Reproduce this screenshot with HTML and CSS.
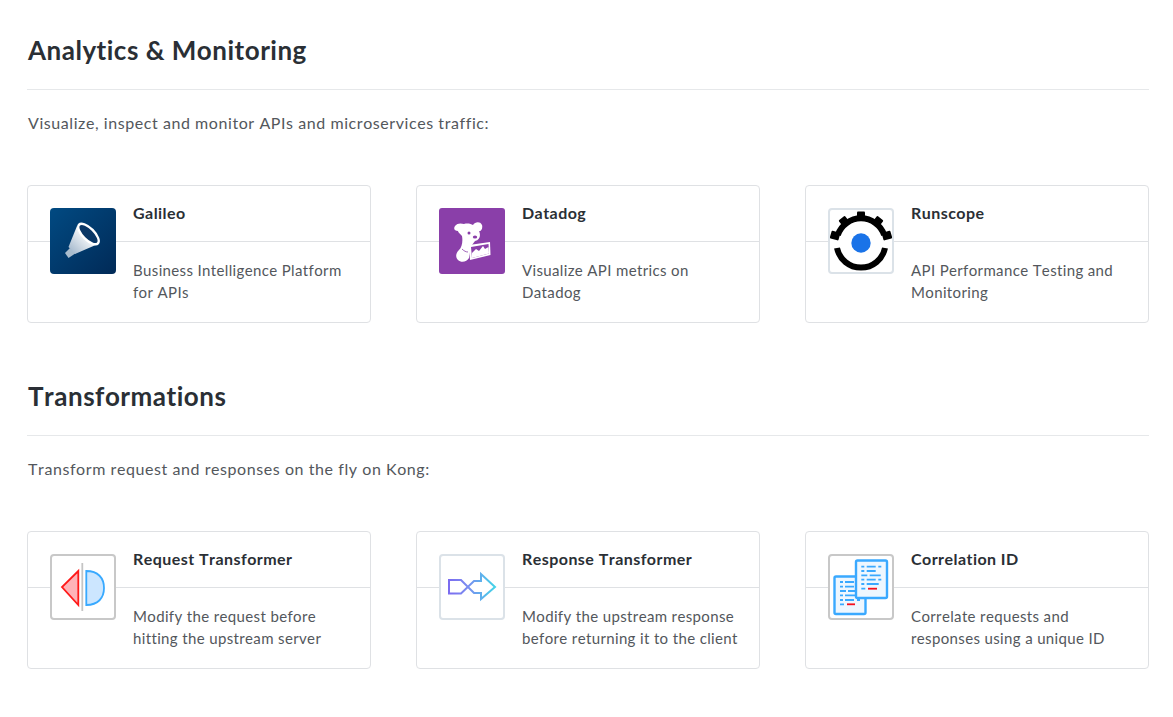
FILE: index.html
```html
<!DOCTYPE html>
<html lang="en">
<head>
<meta charset="utf-8">
<title>Kong Plugins</title>
<link rel="stylesheet" href="styles.css">
</head>
<body>
<main class="page">
  <section class="section">
    <h2 class="title">Analytics &amp; Monitoring</h2>
    <p class="intro">Visualize, inspect and monitor APIs and microservices traffic:</p>
    <div class="grid">
      <article class="card">
        <div class="logo">
          <svg viewBox="0 0 66 66" width="66" height="66">
            <defs>
              <linearGradient id="gbg" x1="0" y1="0" x2="1" y2="1"><stop offset="0" stop-color="#014a82"/><stop offset="1" stop-color="#012a57"/></linearGradient>
              <linearGradient id="gcone" x1="0" y1="1" x2="1" y2="0"><stop offset="0.1" stop-color="#a9bccf"/><stop offset="0.7" stop-color="#ffffff"/></linearGradient>
            </defs>
            <rect width="66" height="66" rx="4" fill="url(#gbg)"/>
            <path d="M20 40 L15 45 L18.500 50 L26 45 Z" fill="#a9bccd"/>
            <path d="M27 18 L18.500 39 L25 46 L48 36 Z" fill="url(#gcone)"/>
            <ellipse cx="38.500" cy="26" rx="14.500" ry="7" transform="rotate(45 38.500 26)" fill="#fff"/>
            <ellipse cx="38.500" cy="26" rx="12" ry="4.500" transform="rotate(45 38.500 26)" fill="#0a3766"/>
          </svg>
        </div>
        <div class="body">
          <h3 class="name">Galileo</h3>
          <p class="desc">Business Intelligence Platform for APIs</p>
        </div>
      </article>
      <article class="card">
        <div class="logo">
          <svg viewBox="0 0 66 66" width="66" height="66">
            <rect width="66" height="66" rx="3" fill="#8a3fa9"/>
            <path d="M16 18 C18 15 22 15 25 16 C29 15 32 16 34 17 C36 14 41 13 43 17 C44 20 42 24 40 23 C42 27 41 32 36 33 L33 37 L31 44 L30 50 C28 54 22 55 19 52 C16 49 17 45 20 42 C23 39 24 33 23 28 C20 25 19 24 19 23 C16 23 14 21 16 18 Z" fill="#fff"/>
            <path d="M30 37 L51 34 L51.500 47 L31 52 Z" fill="#fff"/>
            <path d="M32 39 L49.500 36 L50 45.500 L33 50 Z" fill="#8a3fa9"/>
            <path d="M33 50 L33 45 L37 41 L40 43 L44 38 L46 41 L49.500 39 L50 45.500 Z" fill="#fff"/>
            <circle cx="30" cy="25" r="1.500" fill="#8a3fa9"/>
            <ellipse cx="36" cy="29" rx="2.200" ry="1.500" fill="#8a3fa9"/>
            <path d="M23 41 C25 43 27 44 29 44" stroke="#8a3fa9" stroke-width="0.8" fill="none"/>
          </svg>
        </div>
        <div class="body">
          <h3 class="name">Datadog</h3>
          <p class="desc">Visualize API metrics on Datadog</p>
        </div>
      </article>
      <article class="card">
        <div class="logo logo-framed">
          <svg viewBox="0 0 62 62" width="62" height="62">
            <g fill="#000">
              <rect x="27" y="1.500" width="8" height="9" rx="1"/>
              <rect x="27" y="1.500" width="8" height="9" rx="1" transform="rotate(38 31 33)"/>
              <rect x="27" y="1.500" width="8" height="9" rx="1" transform="rotate(-38 31 33)"/>
              <rect x="27" y="1.500" width="8" height="9" rx="1" transform="rotate(74 31 33)"/>
              <rect x="27" y="1.500" width="8" height="9" rx="1" transform="rotate(-74 31 33)"/>
            </g>
            <path d="M7.800 25 A24.500 24.500 0 0 1 54.200 25" fill="none" stroke="#000" stroke-width="6"/>
            <path d="M7 38 A24.500 24.500 0 0 0 55 38" fill="none" stroke="#000" stroke-width="6"/>
            <circle cx="31" cy="33" r="9.700" fill="#1a73e8"/>
          </svg>
        </div>
        <div class="body">
          <h3 class="name">Runscope</h3>
          <p class="desc">API Performance Testing and Monitoring</p>
        </div>
      </article>
    </div>
  </section>
  <section class="section">
    <h2 class="title">Transformations</h2>
    <p class="intro">Transform request and responses on the fly on Kong:</p>
    <div class="grid">
      <article class="card">
        <div class="logo logo-grey">
          <svg viewBox="0 0 62 62" width="62" height="62">
            <path d="M30.300 7 V55" stroke="#c4c4c4" stroke-width="1.800" fill="none"/>
            <path d="M26.300 15 V49 L10 31 Z" fill="#ffb3b8" stroke="#ff1a1a" stroke-width="1.800"/>
            <path d="M34.300 15 C46 15 52 22 52 32 C52 42 46 49 34.300 49 Z" fill="#cce6ff" stroke="#38a9ff" stroke-width="1.800"/>
          </svg>
        </div>
        <div class="body">
          <h3 class="name">Request Transformer</h3>
          <p class="desc">Modify the request before hitting the upstream server</p>
        </div>
      </article>
      <article class="card">
        <div class="logo logo-framed">
          <svg viewBox="0 0 62 62" width="62" height="62">
            <defs>
              <linearGradient id="rt" gradientUnits="userSpaceOnUse" x1="8" y1="0" x2="54" y2="0"><stop offset="0" stop-color="#7b6cf0"/><stop offset="0.4" stop-color="#7b8cf0"/><stop offset="1" stop-color="#43d3e8"/></linearGradient>
            </defs>
            <path d="M8 24 H20 L33 37 H40 V43 L54 31 L40 18 V25 H33 L20 37.500 H8 Z" fill="none" stroke="url(#rt)" stroke-width="2"/>
          </svg>
        </div>
        <div class="body">
          <h3 class="name">Response Transformer</h3>
          <p class="desc">Modify the upstream response before returning it to the client</p>
        </div>
      </article>
      <article class="card">
        <div class="logo logo-grey">
          <svg viewBox="0 0 62 62" width="62" height="62">
            <rect x="4.500" y="20.500" width="31" height="37.500" rx="1.500" fill="#eef7ff" stroke="#3aa9ff" stroke-width="2.400"/>
            <path stroke="#3aa9ff" stroke-width="1.800" d="M10 26 h3 M15 26 h9 M10 30.700 h3 M15 30.700 h9 M10 35 h6 M18 35 h9 M10 39.300 h3 M15 39.300 h12 M10 44 h3 M15 44 h9 M27 44 h3 M10 48.300 h4"/>
            <path d="M17 48.300 h8" stroke="#f5101e" stroke-width="1.800"/>
            <rect x="26" y="4.500" width="31" height="37.500" rx="1.500" fill="#eef7ff" stroke="#3aa9ff" stroke-width="2.400"/>
            <path stroke="#3aa9ff" stroke-width="1.800" d="M31.300 10.700 h3 M36.700 10.700 h9 M48.300 10.700 h3 M31.300 15 h3 M36.700 15 h9 M31.300 19.300 h6 M39.700 19.300 h11 M31.300 23.700 h3 M36.700 23.700 h9 M48.300 23.700 h3 M31.300 28 h3 M36.700 28 h12 M31.300 32.700 h4"/>
            <path d="M38 32.700 h9" stroke="#f5101e" stroke-width="1.800"/>
          </svg>
        </div>
        <div class="body">
          <h3 class="name">Correlation ID</h3>
          <p class="desc">Correlate requests and responses using a unique ID</p>
        </div>
      </article>
    </div>
  </section>
</main>
</body>
</html>
```
FILE: styles.css
```css
* { box-sizing: border-box; }
html, body { margin: 0; padding: 0; background: #fff; }
body {
  font-family: "Lato", "Open Sans", sans-serif;
  font-kerning: none;
  color: #53575c;
  height: 717px;
  overflow: hidden;
}
.page { padding: 32px 24px 0 27px; }
.section { margin-bottom: 55px; }
.title {
  margin: 0;
  padding: 0 0 21px 1px;
  height: 58px;
  font-size: 26px;
  line-height: 37px;
  font-weight: 700;
  letter-spacing: 0.5px;
  color: #2a2f35;
  border-bottom: 1px solid #e6e8ea;
}
.intro {
  margin: 21px 0 0;
  padding-left: 1px;
  font-size: 16px;
  line-height: 24px;
  letter-spacing: 0.57px;
}
.grid {
  display: grid;
  grid-template-columns: repeat(3, 344px);
  column-gap: 45px;
  margin-top: 50px;
}
.card {
  position: relative;
  display: flex;
  height: 138px;
  padding: 22px 0 0 22px;
  border: 1px solid #dfe1e4;
  border-radius: 4px;
  background: linear-gradient(#dfe1e4, #dfe1e4) 0 55px / 100% 1px no-repeat;
}
.logo {
  flex: none;
  width: 66px;
  height: 66px;
  display: flex;
  align-items: center;
  justify-content: center;
  border-radius: 4px;
  background: #fff;
}
.logo-framed { border: 2px solid #dbe2e8; }
.logo-grey { border: 2px solid #c8c8c8; }
.body { margin-left: 17px; flex: 1; }
.name {
  margin: 0;
  height: 51px;
  font-size: 16px;
  line-height: 10px;
  font-weight: 700;
  letter-spacing: 0.45px;
  color: #2a2f35;
}
.desc {
  margin: 0;
  padding-right: 10px;
  font-size: 15px;
  line-height: 22px;
  letter-spacing: 0.36px;
}
```
